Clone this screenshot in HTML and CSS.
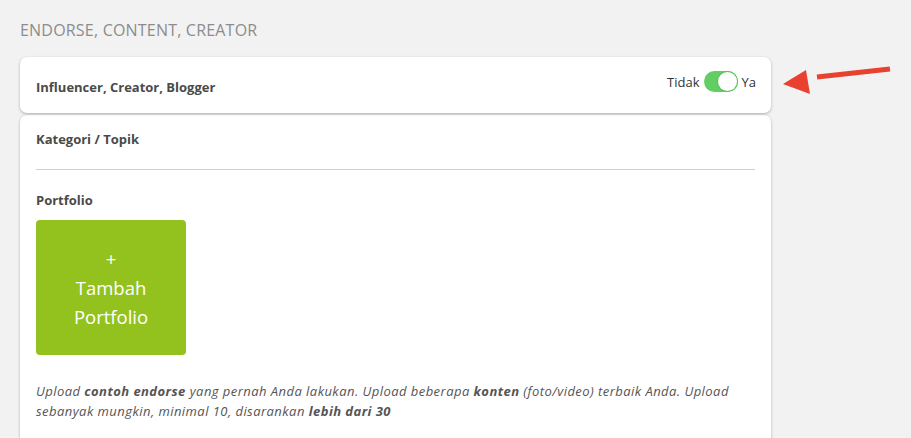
FILE: index.html
```html
<!DOCTYPE html>
<html>
<head>
<meta charset="utf-8">
<link rel="stylesheet" href="styles.css">
</head>
<body>
<div class="page">
  <h2 class="section-title">ENDORSE, CONTENT, CREATOR</h2>
  <div class="row">
    <div class="card header-card">
      <span class="label">Influencer, Creator, Blogger</span>
      <div class="switch">
        <span>Tidak</span>
        <span class="toggle"><span class="knob"></span></span>
        <span>Ya</span>
      </div>
    </div>
    <svg class="arrow" width="120" height="40" viewBox="0 0 120 40">
      <path d="M108 10 L35 18" stroke="#e8412f" stroke-width="5" fill="none" stroke-linecap="butt"/>
      <polygon points="1,25 24,11 28,35" fill="#e8412f"/>
    </svg>
  </div>
  <div class="card body-card">
    <div class="field-title">Kategori / Topik</div>
    <div class="divider"></div>
    <div class="field-title portfolio-title">Portfolio</div>
    <button class="add-btn">+<br>Tambah<br>Portfolio</button>
    <p class="hint">Upload <b>contoh endorse</b> yang pernah Anda lakukan. Upload beberapa <b>konten</b> (foto/video) terbaik Anda. Upload sebanyak mungkin, minimal 10, disarankan <b>lebih dari 30</b></p>
  </div>
</div>
</body>
</html>
```
FILE: styles.css
```css
html, body {
  margin: 0;
  padding: 0;
  background: #f2f2f2;
  font-family: "Open Sans", Lato, sans-serif;
  color: #4a4a4a;
  overflow: hidden;
  height: 438px;
}
.page {
  padding: 20px 0 0 20px;
  width: 751px;
}
.section-title {
  margin: 0;
  font-size: 16px;
  font-weight: 400;
  color: #8c8c8c;
  line-height: 20px;
  letter-spacing: 0.2px;
}
.row {
  position: relative;
  margin-top: 17px;
}
.card {
  background: #fff;
  border-radius: 7px;
  box-shadow: 0 1px 3px rgba(0,0,0,0.28);
}
.header-card {
  height: 56px;
  display: flex;
  align-items: center;
  justify-content: space-between;
  padding: 0 15px 0 16px;
  box-sizing: border-box;
}
.label {
  font-size: 13px;
  font-weight: 700;
  color: #4a4a4a;
  margin-top: 4px;
}
.switch {
  display: flex;
  align-items: center;
  gap: 4px;
  font-size: 13px;
  color: #333;
  margin-top: -7px;
}
.toggle {
  width: 34px;
  height: 21px;
  border-radius: 11px;
  background: #62cd62;
  position: relative;
  display: inline-block;
}
.knob {
  position: absolute;
  right: 1px;
  top: 1px;
  width: 19px;
  height: 19px;
  border-radius: 50%;
  background: #fff;
  box-shadow: 0 0 0 1px #5bc05b;
}
.arrow {
  position: absolute;
  left: 762px;
  top: 2px;
}
.body-card {
  margin-top: 2px;
  padding: 15px 16px 0 16px;
  height: 340px;
  border-radius: 7px 7px 0 0;
}
.field-title {
  font-size: 13px;
  font-weight: 700;
  color: #4a4a4a;
  line-height: 18px;
}
.divider {
  height: 1px;
  background: #cfcfcf;
  margin-top: 21px;
}
.portfolio-title {
  margin-top: 21px;
}
.add-btn {
  margin-top: 11px;
  width: 150px;
  height: 135px;
  border: none;
  border-radius: 4px;
  background: #93c21e;
  color: #fff;
  font-family: "Open Sans", Lato, sans-serif;
  font-size: 18.5px;
  line-height: 29px;
  font-weight: 500;
  display: block;
  padding: 0;
}
.hint {
  margin: 26px 0 0 0;
  font-size: 13px;
  font-style: italic;
  line-height: 20px;
  color: #555;
  letter-spacing: 0.45px;
  width: 719px;
}
```
